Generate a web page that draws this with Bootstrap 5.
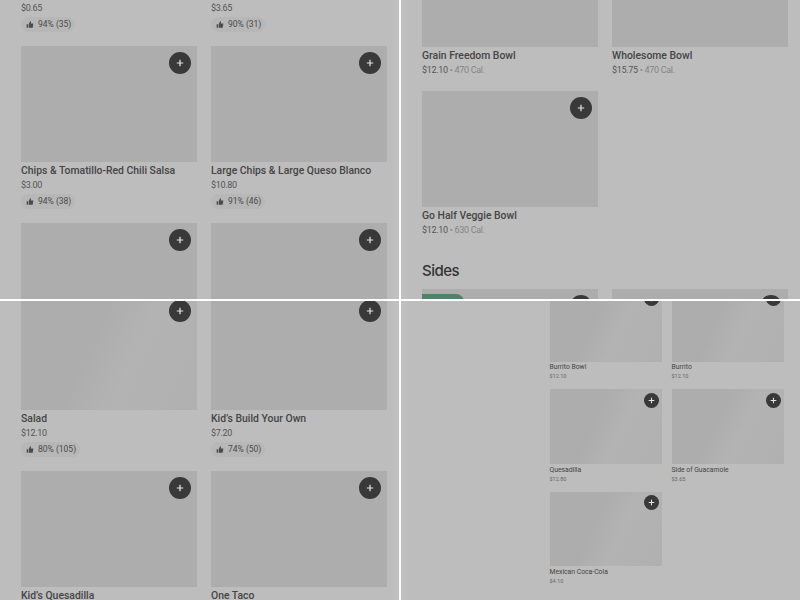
<!DOCTYPE html>
<html lang="en">
<head>
    <meta charset="UTF-8">
    <title>Menu</title>
    <link href="https://cdn.jsdelivr.net/npm/bootstrap@5.3.0/dist/css/bootstrap.min.css" rel="stylesheet">
    <style>
        html, body { margin: 0; height: 600px; overflow: hidden; background: #fff; }
        .shot-wall { display: grid; grid-template-columns: 399px 399px; grid-template-rows: 299px 299px; gap: 2px; height: 600px; font-family: Roboto, "Liberation Sans", sans-serif; color: #3a3a3a; }
        .pane { background: #bdbdbd; overflow: hidden; }
        .pane-left { padding-left: 21px; border-right: 6px solid #c0c0c0; }
        .pane-right { padding-left: 15px; border-left: 6px solid #c0c0c0; }
        .dish-grid { display: grid; grid-template-columns: 176px 176px; column-gap: 14px; width: 366px; opacity: .99; }
        .dish { margin-bottom: 14px; }
        .dish-pic { height: 116px; background: #adadad; position: relative; }
        .dish-pic.shiny { background: linear-gradient(115deg, #adadad 40%, #b3b3b3 62%, #b0b0b0 100%); }
        .add-btn { position: absolute; top: 6px; right: 6px; width: 22px; height: 22px; border-radius: 50%; background: #383838; color: #e6e6e6; display: flex; align-items: center; justify-content: center; }
        .dish-name { font-size: 10.4px; font-weight: 500; line-height: 15px; margin-top: 1px; white-space: nowrap; color: #444; }
        .dish-price { font-size: 9px; letter-spacing: -.3px; line-height: 14px; color: #555; white-space: nowrap; }
        .dish-price span { color: #858585; }
        .rate-pill { display: flex; width: fit-content; align-items: center; gap: 4px; height: 15px; padding: 0 4px 0 5px; margin-top: 2px; font-size: 8.5px; background: #b7b7b7; border-radius: 8px; color: #4a4a4a; }
        .sect-title { font-size: 15px; font-weight: 500; letter-spacing: -.5px; color: #333; line-height: 20px; margin: 10px 0 0; font-family: Inter, sans-serif; }
        .deal-tag { position: absolute; left: 0; top: 5px; width: 42px; height: 20px; background: #4a8467; border-radius: 0 8px 8px 0; }
        .mini-grid { display: grid; grid-template-columns: 112.5px 112.5px; column-gap: 9.5px; margin-left: 127.5px; opacity: .99; }
        .mini-grid .dish { margin-bottom: 0; height: 102.4px; }
        .mini-grid .dish-pic { height: 74.7px; }
        .mini-grid .add-btn { top: 3.5px; right: 3.5px; width: 15px; height: 15px; }
        .mini-grid .dish-name { font-size: 6.8px; font-weight: 400; line-height: 9px; margin-top: 1.5px; }
        .mini-grid .dish-price { font-size: 5.5px; letter-spacing: 0; line-height: 9px; color: #666; }
    </style>
</head>
<body>
<svg width="0" height="0" class="position-absolute">
    <symbol id="plus" viewBox="0 0 10 10"><path d="M5 1v8M1 5h8" stroke="currentColor" stroke-width="1.5" fill="none"/></symbol>
    <symbol id="thumb" viewBox="0 0 12 12"><path d="M1 5.5h2V11H1zM4 5.5 6.2 1c1 .1 1.4.8 1.3 1.6L7.2 4.5H11l-.9 6.5H4z" fill="currentColor"/></symbol>
</svg>
<div class="shot-wall" id="wall"></div>

<script>
    const plus = '<span class="add-btn"><svg width="8" height="8"><use href="#plus"/></svg></span>';
    const plusSmall = '<span class="add-btn"><svg width="7" height="7"><use href="#plus"/></svg></span>';

    function dish(d) {
        const pic = d.noPic ? '' : `<div class="dish-pic ${d.shiny ? 'shiny' : ''}">${d.tag ? '<span class="deal-tag"></span>' : ''}${d.small ? plusSmall : plus}</div>`;
        const cal = d.cal ? ` <span>• ${d.cal} Cal.</span>` : '';
        const rate = d.rate ? `<div class="rate-pill"><svg width="8" height="9"><use href="#thumb"/></svg>${d.rate}</div>` : '';
        const name = d.name ? `<div class="dish-name">${d.name}</div>` : '';
        const price = d.price ? `<div class="dish-price">${d.price}${cal}</div>` : '';
        return `<div class="dish">${pic}${name}${price}${rate}</div>`;
    }

    const panes = [
        { cls: 'pane-left', top: 1, items: [
            {noPic: true, price: '$0.65', rate: '94% (35)'}, {noPic: true, price: '$3.65', rate: '90% (31)'},
            {name: 'Chips &amp; Tomatillo-Red Chili Salsa', price: '$3.00', rate: '94% (38)'},
            {name: 'Large Chips &amp; Large Queso Blanco', price: '$10.80', rate: '91% (46)'},
            {}, {}
        ]},
        { cls: 'pane-right', top: -69, items: [
            {name: 'Grain Freedom Bowl', price: '$12.10', cal: 470}, {name: 'Wholesome Bowl', price: '$15.75', cal: 470},
            {name: 'Go Half Veggie Bowl', price: '$12.10', cal: 630}
        ], extra: true },
        { cls: 'pane-left', top: -7, items: [
            {shiny: true, name: 'Salad', price: '$12.10', rate: '80% (105)'}, {name: 'Kid’s Build Your Own', price: '$7.20', rate: '74% (50)'},
            {name: 'Kid’s Quesadilla'}, {name: 'One Taco'}
        ]},
        { cls: 'pane-right', mini: true, top: -14, items: [
            {shiny: true, small: true, name: 'Burrito Bowl', price: '$12.10'}, {shiny: true, small: true, name: 'Burrito', price: '$12.10'},
            {shiny: true, small: true, name: 'Quesadilla', price: '$12.80'}, {shiny: true, small: true, name: 'Side of Guacamole', price: '$3.65'},
            {shiny: true, small: true, name: 'Mexican Coca-Cola', price: '$4.10'}
        ]}
    ];

    document.getElementById('wall').innerHTML = panes.map(p => {
        let more = '';
        if (p.extra) {
            more = '<h2 class="sect-title">Sides</h2><div class="dish-grid mt-2">' +
                dish({tag: true}) + dish({}) + '</div>';
        }
        return `<div class="pane ${p.cls}"><div class="${p.mini ? 'mini-grid' : 'dish-grid'}" style="margin-top:${p.top}px">${p.items.map(i => dish(i)).join('')}</div>${more}</div>`;
    }).join('');
</script>
<script src="https://cdn.jsdelivr.net/npm/bootstrap@5.3.0/dist/js/bootstrap.bundle.min.js"></script>
</body>
</html>
